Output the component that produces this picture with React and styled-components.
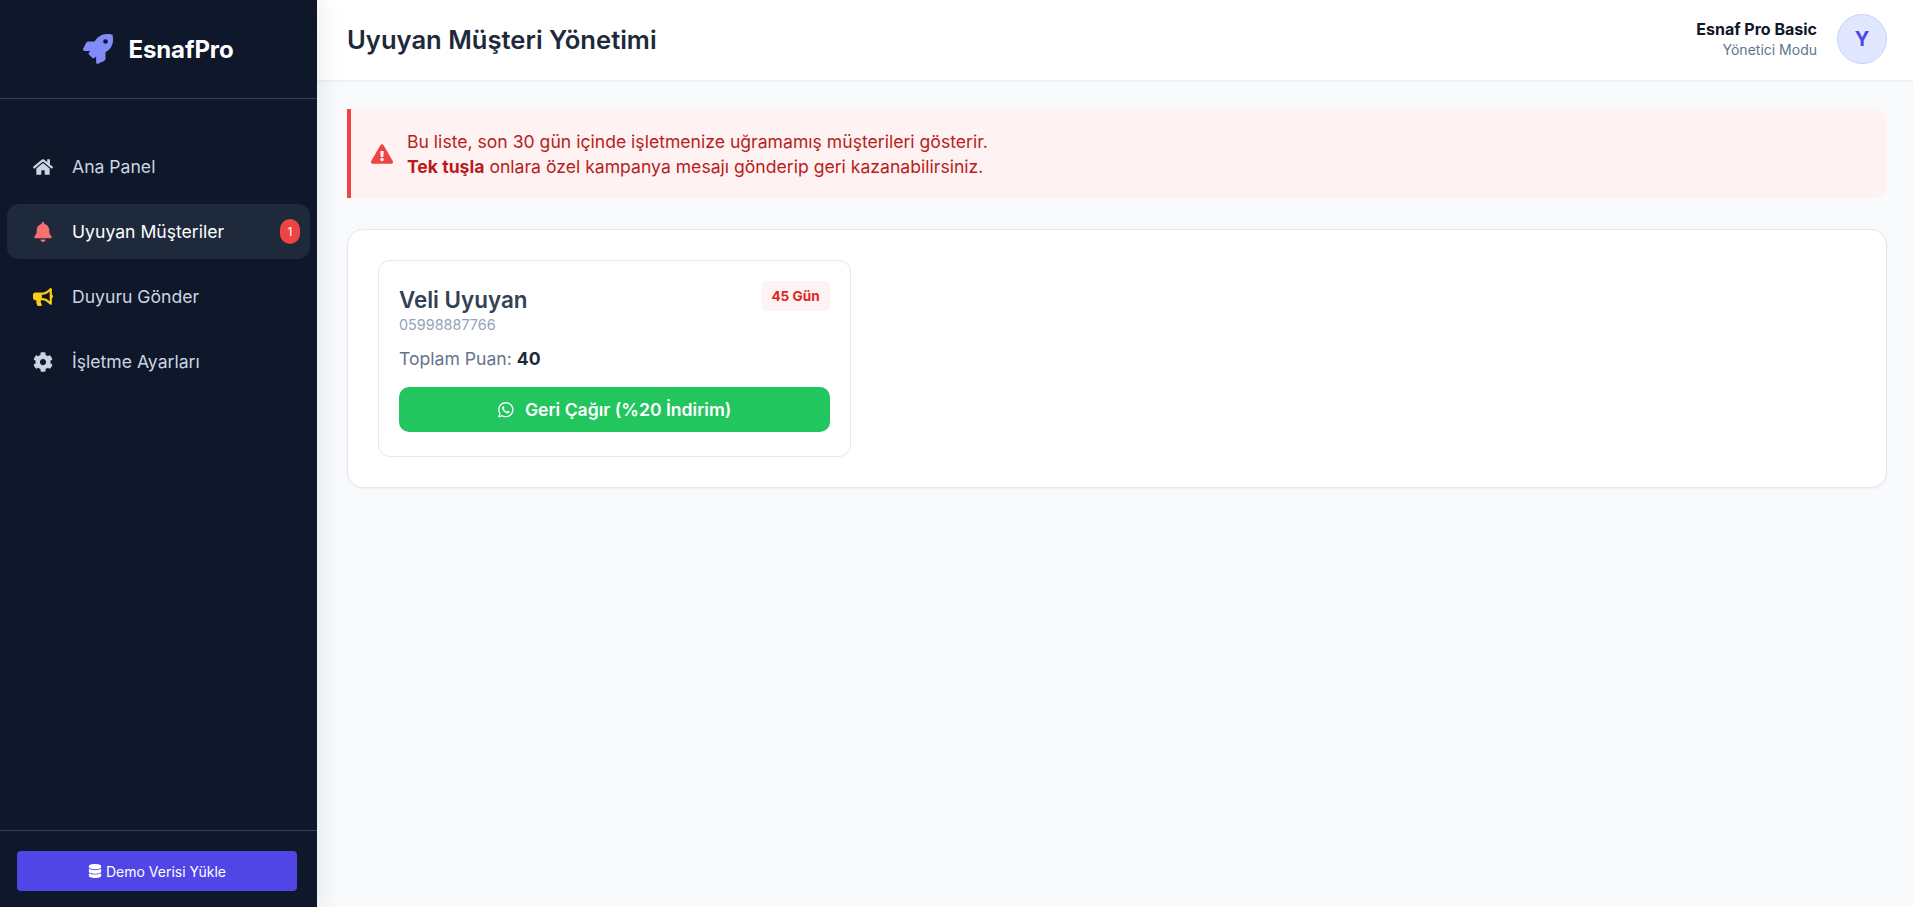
import React from 'react';
import styled, { createGlobalStyle } from 'styled-components';
import {
  FaRocket,
  FaHome,
  FaBell,
  FaBullhorn,
  FaCog,
  FaDatabase,
  FaExclamationTriangle,
  FaWhatsapp,
} from 'react-icons/fa';

const GlobalStyle = createGlobalStyle`
  * {
    box-sizing: border-box;
  }

  body {
    margin: 0;
    background: #f8fafc;
    font-family: Inter, "Noto Sans", sans-serif;
  }
`;

const Layout = styled.div`
  display: flex;
  height: 907px;
  overflow: hidden;
`;

const Sidebar = styled.aside`
  width: 317px;
  flex-shrink: 0;
  display: flex;
  flex-direction: column;
  background: #0f172a;
  box-shadow: 4px 0 24px rgba(15, 23, 42, 0.08);
  z-index: 2;
`;

const Brand = styled.div`
  height: 99px;
  display: flex;
  align-items: center;
  justify-content: center;
  gap: 15px;
  border-bottom: 1px solid #334155;
  color: #fff;
  font-size: 24px;
  font-weight: 700;
  letter-spacing: -0.1px;
`;

const BrandIcon = styled(FaRocket)`
  width: 30px;
  height: 30px;
  color: #818cf8;
`;

const Nav = styled.nav`
  flex: 1;
  display: flex;
  flex-direction: column;
  gap: 10px;
  padding: 40px 7px 0 7px;
`;

const NavItem = styled.div`
  height: 55px;
  display: flex;
  align-items: center;
  padding: 0 10px 0 26px;
  border-radius: 12px;
  background: ${(p) => (p.$active ? '#1e293b' : 'transparent')};
  color: ${(p) => (p.$active ? '#fff' : '#cbd5e1')};
  font-size: 17.6px;
`;

const NavIcon = styled.span`
  width: 39px;
  flex-shrink: 0;
  display: flex;
  align-items: center;
  color: ${(p) => p.$color};
  font-size: 20px;
`;

const NavLabel = styled.span`
  flex: 1;
`;

const Count = styled.span`
  width: 20px;
  height: 25px;
  display: flex;
  align-items: center;
  justify-content: center;
  border-radius: 10px;
  background: #ef4444;
  color: #fff;
  font-size: 12px;
`;

const SidebarFooter = styled.div`
  padding: 20px 20px 16px 17px;
  border-top: 1px solid #334155;
`;

const DemoButton = styled.button`
  width: 100%;
  height: 40px;
  display: flex;
  align-items: center;
  justify-content: center;
  gap: 4px;
  border: none;
  border-radius: 4px;
  background: #4f46e5;
  color: #fff;
  font-family: inherit;
  font-size: 14px;
`;

const Main = styled.main`
  flex: 1;
  min-width: 0;
  display: flex;
  flex-direction: column;
`;

const Header = styled.header`
  height: 80px;
  flex-shrink: 0;
  display: flex;
  align-items: center;
  justify-content: space-between;
  padding: 0 26px 2px 30px;
  background: #fff;
  box-shadow: 0 1px 3px rgba(15, 23, 42, 0.08);
`;

const PageTitle = styled.h1`
  margin: 0;
  color: #1e293b;
  font-size: 25.6px;
  font-weight: 600;
`;

const Account = styled.div`
  display: flex;
  align-items: center;
  gap: 20px;
`;

const AccountText = styled.div`
  text-align: right;
`;

const AccountName = styled.div`
  color: #0f172a;
  font-size: 16px;
  font-weight: 700;
  line-height: 22px;
`;

const AccountRole = styled.div`
  color: #64748b;
  font-size: 14px;
  line-height: 20px;
`;

const Avatar = styled.div`
  width: 50px;
  height: 50px;
  display: flex;
  align-items: center;
  justify-content: center;
  border: 1px solid #c7d2fe;
  border-radius: 50%;
  background: #e0e7ff;
  color: #4f46e5;
  font-size: 20px;
  font-weight: 700;
`;

const Content = styled.div`
  display: flex;
  flex-direction: column;
  gap: 31px;
  padding: 29px 26px 0 30px;
`;

const Alert = styled.div`
  height: 89px;
  display: flex;
  align-items: center;
  gap: 14px;
  padding-left: 20px;
  border-left: 4px solid #ef4444;
  border-radius: 0 12px 12px 0;
  background: #fef2f2;
  color: #b91c1c;
  font-size: 17.6px;
  line-height: 25px;
`;

const AlertIcon = styled(FaExclamationTriangle)`
  width: 22px;
  height: 20px;
  color: #ef4444;
`;

const Panel = styled.section`
  display: grid;
  grid-template-columns: repeat(3, 1fr);
  gap: 30px;
  padding: 30px;
  border: 1px solid #e2e8f0;
  border-radius: 16px;
  background: #fff;
  box-shadow: 0 1px 3px rgba(15, 23, 42, 0.05);
`;

const CustomerCard = styled.article`
  height: 197px;
  padding: 20px;
  border: 1px solid #e2e8f0;
  border-radius: 12px;
  background: #fff;
`;

const CardTop = styled.div`
  display: flex;
  align-items: flex-start;
  justify-content: space-between;
`;

const CustomerName = styled.div`
  margin-top: 3px;
  color: #334155;
  font-size: 22.4px;
  font-weight: 600;
  line-height: 31px;
`;

const Phone = styled.div`
  color: #94a3b8;
  font-size: 14.4px;
  line-height: 20px;
`;

const DaysBadge = styled.span`
  padding: 0 10px;
  height: 30px;
  display: flex;
  align-items: center;
  border-radius: 6px;
  background: #fef2f2;
  color: #dc2626;
  font-size: 13.6px;
  font-weight: 700;
`;

const Points = styled.div`
  margin: 11px 0 16px;
  color: #64748b;
  font-size: 17.6px;
  line-height: 25px;

  strong {
    color: #1e293b;
    font-weight: 700;
  }
`;

const RecallButton = styled.button`
  width: 100%;
  height: 45px;
  display: flex;
  align-items: center;
  justify-content: center;
  gap: 10px;
  border: none;
  border-radius: 10px;
  background: #22c55e;
  color: #fff;
  font-family: inherit;
  font-size: 17.6px;
  font-weight: 600;
`;

const menu = [
  { label: 'Ana Panel', icon: <FaHome />, color: '#cbd5e1' },
  { label: 'Uyuyan Müşteriler', icon: <FaBell />, color: '#f87171', active: true, count: 1 },
  { label: 'Duyuru Gönder', icon: <FaBullhorn />, color: '#facc15' },
  { label: 'İşletme Ayarları', icon: <FaCog />, color: '#cbd5e1' },
];

const App = () => (
  <Layout>
    <GlobalStyle />
    <Sidebar>
      <Brand>
        <BrandIcon />
        EsnafPro
      </Brand>
      <Nav>
        {menu.map((item) => (
          <NavItem key={item.label} $active={item.active}>
            <NavIcon $color={item.color}>{item.icon}</NavIcon>
            <NavLabel>{item.label}</NavLabel>
            {item.count ? <Count>{item.count}</Count> : null}
          </NavItem>
        ))}
      </Nav>
      <SidebarFooter>
        <DemoButton>
          <FaDatabase />
          Demo Verisi Yükle
        </DemoButton>
      </SidebarFooter>
    </Sidebar>
    <Main>
      <Header>
        <PageTitle>Uyuyan Müşteri Yönetimi</PageTitle>
        <Account>
          <AccountText>
            <AccountName>Esnaf Pro Basic</AccountName>
            <AccountRole>Yönetici Modu</AccountRole>
          </AccountText>
          <Avatar>Y</Avatar>
        </Account>
      </Header>
      <Content>
        <Alert>
          <AlertIcon />
          <div>
            Bu liste, son 30 gün içinde işletmenize uğramamış müşterileri gösterir.
            <br />
            <strong>Tek tuşla</strong> onlara özel kampanya mesajı gönderip geri kazanabilirsiniz.
          </div>
        </Alert>
        <Panel>
          <CustomerCard>
            <CardTop>
              <div>
                <CustomerName>Veli Uyuyan</CustomerName>
                <Phone>05998887766</Phone>
              </div>
              <DaysBadge>45 Gün</DaysBadge>
            </CardTop>
            <Points>
              Toplam Puan: <strong>40</strong>
            </Points>
            <RecallButton>
              <FaWhatsapp />
              Geri Çağır (%20 İndirim)
            </RecallButton>
          </CustomerCard>
        </Panel>
      </Content>
    </Main>
  </Layout>
);

export default App;
